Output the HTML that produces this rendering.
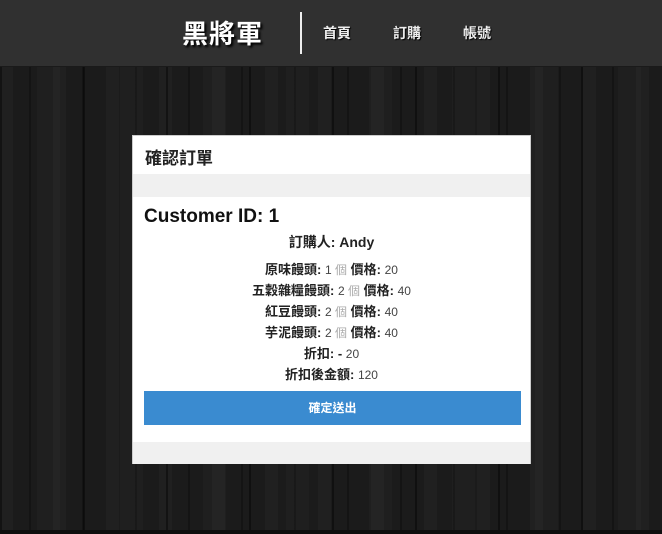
<!DOCTYPE html>
<html><head><meta charset="utf-8"><style>
*{margin:0;padding:0;box-sizing:border-box}
body{width:662px;height:534px;overflow:hidden;position:relative;font-family:"Liberation Sans","Noto Sans CJK TC",sans-serif;
background:
repeating-linear-gradient(90deg,rgba(0,0,0,.4) 0 2px,transparent 2px 37px,rgba(255,255,255,.02) 37px 60px,transparent 60px 83px),
repeating-linear-gradient(90deg,rgba(255,255,255,.025) 0 13px,transparent 13px 29px,rgba(0,0,0,.25) 29px 31px,transparent 31px 53px),
#1b1b1b;}
.hdr{position:absolute;left:0;top:0;width:662px;height:67px;background:#303030;border-bottom:1px solid #1a1a1a}
.logo{position:absolute;left:182px;top:14px;color:#fff;font-size:26px;font-weight:bold;letter-spacing:1px;text-shadow:2px 2px 2px #000}
.sep{position:absolute;left:300px;top:12px;width:2px;height:42px;background:#eee}
.nav{position:absolute;top:23px;color:#eee;font-size:14px;font-weight:bold;text-shadow:1px 1px 1px #000}
.card{position:absolute;left:132px;top:135px;width:399px;height:329px;background:#fff;border:1px solid #ccc}
.t{position:absolute;left:12px;top:8px;font-size:17px;color:#222;font-weight:bold}
.band{position:absolute;left:0;width:100%;background:#f0f0f0}
.cid{position:absolute;left:11px;top:70px;font-size:19px;font-weight:bold;color:#111}
.c{position:absolute;left:0;width:100%;text-align:center;font-size:13px;color:#222;font-weight:bold}
.c span{font-weight:normal;font-size:12px;color:#444}
.c i{font-style:normal;font-weight:normal;color:#aaa}
.btn{position:absolute;left:11px;top:255px;width:377px;height:34px;background:#3a8bd0;color:#fff;font-size:12px;font-weight:bold;text-align:center;line-height:34px}
.bot{position:absolute;left:0;top:530px;width:662px;height:4px;background:#0e0e0e}
</style></head><body>
<div class="hdr">
<div class="logo">黑將軍</div>
<div class="sep"></div>
<div class="nav" style="left:323px">首頁</div>
<div class="nav" style="left:393px">訂購</div>
<div class="nav" style="left:463px">帳號</div>
</div>
<div class="card">
<div class="t">確認訂單</div>
<div class="band" style="top:38px;height:23px"></div>
<div class="cid">Customer ID: 1</div>
<div class="c" style="top:96px;font-size:14px">訂購人: Andy</div>
<div class="c" style="top:123px">原味饅頭: <span>1 <i>個</i></span> 價格: <span>20</span></div>
<div class="c" style="top:144px">五穀雜糧饅頭: <span>2 <i>個</i></span> 價格: <span>40</span></div>
<div class="c" style="top:165px">紅豆饅頭: <span>2 <i>個</i></span> 價格: <span>40</span></div>
<div class="c" style="top:186px">芋泥饅頭: <span>2 <i>個</i></span> 價格: <span>40</span></div>
<div class="c" style="top:207px">折扣: - <span>20</span></div>
<div class="c" style="top:228px">折扣後金額: <span>120</span></div>
<div class="btn">確定送出</div>
<div class="band" style="top:306px;height:22px"></div>
</div>
<div class="bot"></div>
</body></html>
